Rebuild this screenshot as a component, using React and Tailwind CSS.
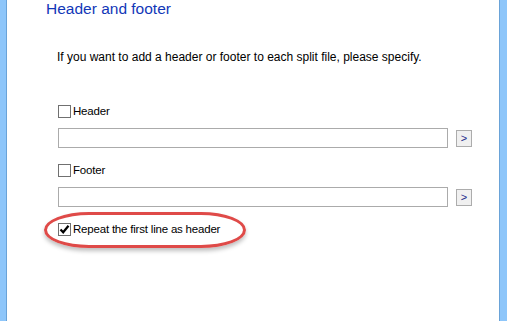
import React from 'react';

const font = { fontFamily: '"Liberation Sans", Arial, sans-serif' };

const Box = ({ checked }) => (
  <span className="flex h-[13px] w-[13px] shrink-0 items-center justify-center border border-[#707070] bg-white">
    {checked && (
      <svg width="11" height="11" viewBox="0 0 11 11">
        <path d="M1.5 5.5 L4.2 8.3 L9.5 1.8" fill="none" stroke="#000" strokeWidth="2.2" />
      </svg>
    )}
  </span>
);

const Check = ({ label, checked }) => (
  <div className="flex h-[14px] items-center gap-[2px] text-[11.5px] text-black">
    <Box checked={checked} />
    <span className="leading-[14px] tracking-[-0.2px]">{label}</span>
  </div>
);

const FieldRow = () => (
  <div className="flex items-center">
    <div className="h-[20px] w-[390px] border border-[#ababab] bg-white" />
    <button className="ml-[8px] flex h-[17px] w-[16px] items-center justify-center border border-[#acacac] bg-[#f0f0f0] text-[11px] leading-none text-[#1a2a8a]">
      &gt;
    </button>
  </div>
);

export default function App() {
  return (
    <div className="flex h-[321px] w-[507px] bg-white" style={font}>
      <div className="w-[7px] border-r border-[#6aa3d8] bg-[#8ec6fa]" />
      <div className="flex-1">
        <h1 className="pl-[39px] pt-[0px] text-[15.5px] font-normal leading-[18px] text-[#1237b8]">
          Header and footer
        </h1>
        <p className="mt-[31px] pl-[50px] text-[12px] leading-[16px] text-black">
          If you want to add a header or footer to each split file, please specify.
        </p>
        <div className="pl-[51px]">
          <div className="mt-[39px]">
            <Check label="Header" />
          </div>
          <div className="mt-[10px]">
            <FieldRow />
          </div>
          <div className="mt-[15px]">
            <Check label="Footer" />
          </div>
          <div className="mt-[10px]">
            <FieldRow />
          </div>
          <div className="relative mt-[15px]">
            <div className="absolute left-[-14px] top-[-10px] h-[36px] w-[202px] rounded-[45px/18px] border-[3px] border-[#df4a48] shadow-[0_3px_4px_rgba(0,0,0,0.25)]" />
            <Check label="Repeat the first line as header" checked />
          </div>
        </div>
      </div>
      <div className="w-[8px] border-l border-[#6aa3d8] bg-[#8ec6fa]" />
    </div>
  );
}
